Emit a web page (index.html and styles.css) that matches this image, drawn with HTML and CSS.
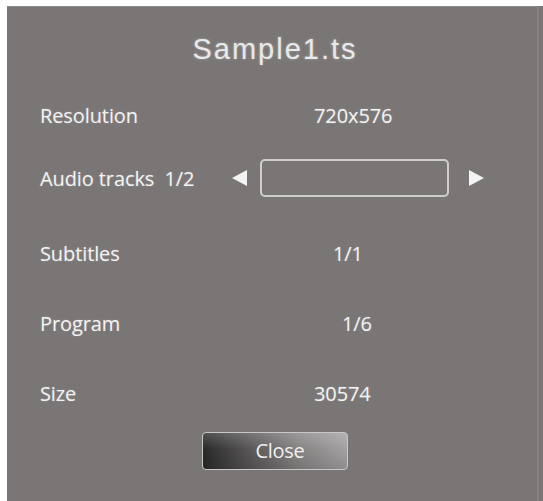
FILE: index.html
```html
<!DOCTYPE html>
<html lang="en">
<head>
<meta charset="utf-8">
<title>Sample1.ts</title>
<link rel="stylesheet" href="styles.css">
</head>
<body>
<div class="panel">
  <h1 class="title">Sample1.ts</h1>
  <div class="info">
    <div class="label">Resolution</div>
    <div class="value">720x576</div>

    <div class="label">Audio tracks&nbsp;&nbsp;1/2</div>
    <div class="selector">
      <svg class="arrow" width="16" height="16" viewBox="0 0 16 16"><path d="M0 8 L15 0 L15 16 Z" fill="#f4f4f4"/></svg>
      <div class="track-box"></div>
      <svg class="arrow" width="16" height="16" viewBox="0 0 16 16"><path d="M16 8 L1 0 L1 16 Z" fill="#f4f4f4"/></svg>
    </div>

    <div class="label">Subtitles</div>
    <div class="value value--sub">1/1</div>

    <div class="label">Program</div>
    <div class="value value--prog">1/6</div>

    <div class="label">Size</div>
    <div class="value">30574</div>
  </div>
  <div class="actions">
    <button class="close-btn" type="button">Close</button>
  </div>
</div>
</body>
</html>
```
FILE: styles.css
```css
html, body {
  margin: 0;
  padding: 0;
  background: #ffffff;
}

body {
  width: 543px;
  height: 501px;
  overflow: hidden;
}

.panel {
  margin: 6px 0 0 7px;
  width: 536px;
  height: 495px;
  box-sizing: border-box;
  padding-left: 33px;
  background: #7a7676;
  box-shadow: inset -4px 0 0 #7a7676, inset -6px 0 0 #878383, inset 0 1px 0 #8a8787;
  display: flex;
  flex-direction: column;
  font-family: "Open Sans", "Noto Sans", sans-serif;
  color: #f3f3f3;
}

.title {
  margin: 0 0 0 -33px;
  height: 84px;
  line-height: 86px;
  text-align: center;
  font-family: "Liberation Sans", Arial, sans-serif;
  font-weight: normal;
  font-size: 29px;
  letter-spacing: 2px;
  color: #e9e9e9;
  text-shadow: 0 0 3px rgba(255, 255, 255, 0.35);
}

.info {
  display: grid;
  grid-template-columns: 192px 1fr;
  grid-template-rows: 50px 76px 74px 66px 74px;
  align-items: center;
  font-size: 20px;
}

.label {
  letter-spacing: -0.1px;
  text-shadow: 0 0 2px rgba(255, 255, 255, 0.25);
}

.value {
  padding-left: 82px;
  letter-spacing: -0.1px;
  text-shadow: 0 0 2px rgba(255, 255, 255, 0.25);
}

.value--sub {
  padding-left: 101px;
}

.value--prog {
  padding-left: 110px;
}

.selector {
  display: flex;
  align-items: center;
}

.arrow {
  display: block;
  flex: none;
}

.track-box {
  width: 189px;
  height: 38px;
  box-sizing: border-box;
  margin: 0 19px 0 12px;
  border: 2px solid #cfcdcd;
  border-radius: 5px;
}

.actions {
  margin-top: 2px;
  display: flex;
  justify-content: center;
  margin-left: -33px;
}

.close-btn {
  width: 146px;
  height: 38px;
  box-sizing: border-box;
  border: 1.5px solid #c9c7c7;
  border-radius: 4px;
  background:
    linear-gradient(to bottom, rgba(255,255,255,0.18), rgba(255,255,255,0) 45%, rgba(0,0,0,0.12)),
    linear-gradient(to right, #2b2a2a, #555353 30%, #858282 65%, #a3a1a1);
  font-family: "Open Sans", "Noto Sans", sans-serif;
  font-size: 20px;
  color: #f1f1f1;
  padding: 0 0 0 10px;
  line-height: 34px;
  letter-spacing: -0.3px;
}
```
